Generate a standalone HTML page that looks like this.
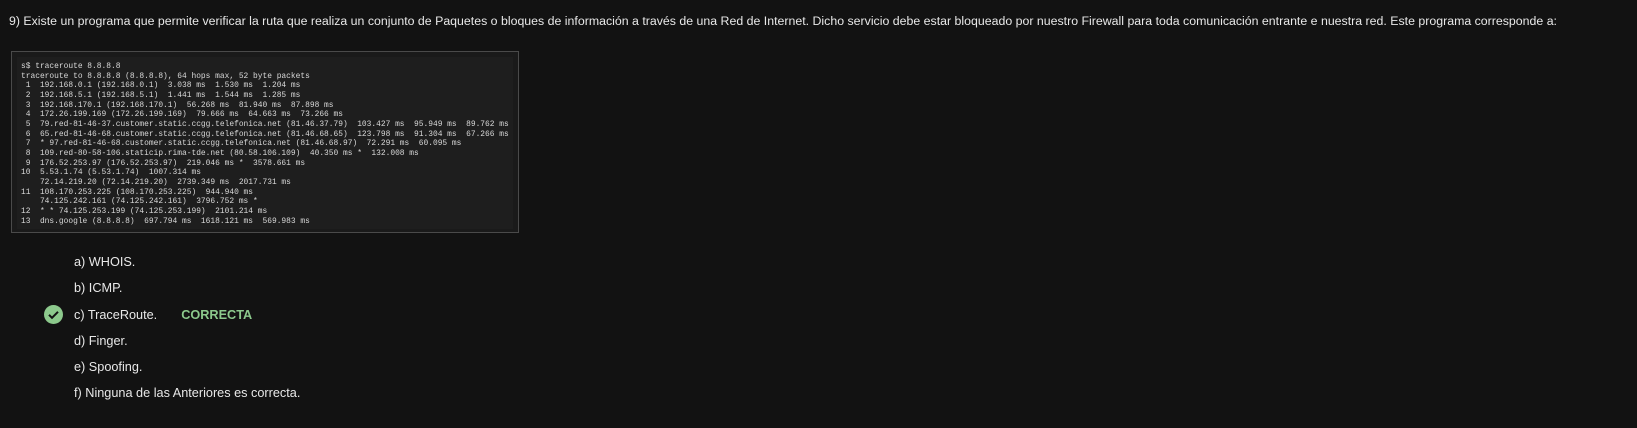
<!DOCTYPE html>
<html><head><meta charset="utf-8"><style>
body{margin:0;background:#121212;width:1637px;height:428px;overflow:hidden;font-family:"Liberation Sans",Arial,sans-serif;color:#e8e8e8;position:relative}
.q{position:absolute;left:9px;top:14px;font-size:12.35px;white-space:nowrap}
.box{position:absolute;left:11px;top:51px;width:506px;height:180px;border:1px solid #4a4a4a;background:#1a1a1a}
.term{position:absolute;left:5px;top:5px;width:496px;height:172px;background:#1e1e1e}
pre{margin:0;position:absolute;left:4px;top:5px;font-family:"Liberation Mono",monospace;font-size:7.9px;line-height:9.65px;color:#d8d8d8}
.o{position:absolute;left:74px;font-size:12.7px;white-space:nowrap}
.ok{color:#8cc98c;font-weight:bold;margin-left:24px}
</style></head><body>
<div class="q">9) Existe un programa que permite verificar la ruta que realiza un conjunto de Paquetes o bloques de información a través de una Red de Internet. Dicho servicio debe estar bloqueado por nuestro Firewall para toda comunicación entrante e nuestra red. Este programa corresponde a:</div>
<div class="box"><div class="term"><pre>s$ traceroute 8.8.8.8
traceroute to 8.8.8.8 (8.8.8.8), 64 hops max, 52 byte packets
 1  192.168.0.1 (192.168.0.1)  3.038 ms  1.530 ms  1.204 ms
 2  192.168.5.1 (192.168.5.1)  1.441 ms  1.544 ms  1.285 ms
 3  192.168.170.1 (192.168.170.1)  56.268 ms  81.940 ms  87.898 ms
 4  172.26.199.169 (172.26.199.169)  79.666 ms  64.663 ms  73.266 ms
 5  79.red-81-46-37.customer.static.ccgg.telefonica.net (81.46.37.79)  103.427 ms  95.949 ms  89.762 ms
 6  65.red-81-46-68.customer.static.ccgg.telefonica.net (81.46.68.65)  123.798 ms  91.304 ms  67.266 ms
 7  * 97.red-81-46-68.customer.static.ccgg.telefonica.net (81.46.68.97)  72.291 ms  60.095 ms
 8  109.red-80-58-106.staticip.rima-tde.net (80.58.106.109)  40.350 ms *  132.008 ms
 9  176.52.253.97 (176.52.253.97)  219.046 ms *  3578.661 ms
10  5.53.1.74 (5.53.1.74)  1007.314 ms
    72.14.219.20 (72.14.219.20)  2739.349 ms  2017.731 ms
11  108.170.253.225 (108.170.253.225)  944.940 ms
    74.125.242.161 (74.125.242.161)  3796.752 ms *
12  * * 74.125.253.199 (74.125.253.199)  2101.214 ms
13  dns.google (8.8.8.8)  697.794 ms  1618.121 ms  569.983 ms</pre></div></div>
<div class="o" style="top:255px">a) WHOIS.</div>
<div class="o" style="top:281px">b) ICMP.</div>
<svg style="position:absolute;left:44px;top:305px" width="19" height="19" viewBox="0 0 19 19"><circle cx="9.5" cy="9.5" r="9.5" fill="#8cc98c"/><path d="M5 9.8l3 3 6-6" stroke="#121212" stroke-width="2" fill="none"/></svg>
<div class="o" style="top:308px">c) TraceRoute.<span class="ok">CORRECTA</span></div>
<div class="o" style="top:334px">d) Finger.</div>
<div class="o" style="top:360px">e) Spoofing.</div>
<div class="o" style="top:386px">f) Ninguna de las Anteriores es correcta.</div>
</body></html>
